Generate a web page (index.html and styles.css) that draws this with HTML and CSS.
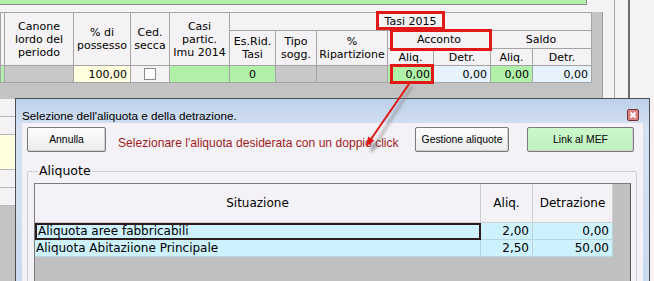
FILE: index.html
```html
<!DOCTYPE html>
<html lang="it">
<head>
    <meta charset="UTF-8">
    <title>Tasi 2015 - Selezione aliquota</title>
    <link rel="stylesheet" href="styles.css">
</head>
<body>
    <div class="screen">
        <div class="left-col">
            <div class="topbar"></div>
            <div class="grid-area">
                <table class="tasi">
                    <colgroup>
                        <col style="width:4px"><col style="width:69px"><col style="width:57px"><col style="width:39px">
                        <col style="width:60px"><col style="width:46px"><col style="width:41px"><col style="width:71px">
                        <col style="width:46px"><col style="width:57px"><col style="width:42px"><col style="width:59px">
                    </colgroup>
                    <tr class="h1">
                        <th rowspan="3"></th>
                        <th rowspan="3">Canone<br>lordo del<br>periodo</th>
                        <th rowspan="3">% di<br>possesso</th>
                        <th rowspan="3">Ced.<br>secca</th>
                        <th rowspan="3">Casi<br>partic.<br>Imu 2014</th>
                        <th colspan="7">Tasi 2015</th>
                    </tr>
                    <tr class="h2">
                        <th rowspan="2">Es.Rid.<br>Tasi</th>
                        <th rowspan="2">Tipo<br>sogg.</th>
                        <th rowspan="2">%<br>Ripartizione</th>
                        <th colspan="2">Acconto</th>
                        <th colspan="2">Saldo</th>
                    </tr>
                    <tr class="h3">
                        <th>Aliq.</th><th>Detr.</th><th>Aliq.</th><th>Detr.</th>
                    </tr>
                    <tr class="data">
                        <td class="green"></td>
                        <td class="gray"></td>
                        <td class="yellow num">100,00</td>
                        <td class="check"><span class="box"></span></td>
                        <td class="green"></td>
                        <td class="green center">0</td>
                        <td class="gray"></td>
                        <td class="gray"></td>
                        <td class="green num">0,00</td>
                        <td class="blue num">0,00</td>
                        <td class="green num">0,00</td>
                        <td class="blue num">0,00</td>
                    </tr>
                </table>
                <!-- righe sotto la finestra -->
                <div class="under">
                    <div class="under-row"></div>
                    <div class="under-row"></div>
                    <div class="under-row yellow-row"></div>
                    <div class="under-row"></div>
                    <div class="under-row"></div>
                </div>
            </div>
        </div>
        <div class="side">
            <div class="rail"></div>
        </div>

        <!-- finestra di selezione -->
        <div class="dialog">
            <div class="titlebar">
                <span class="title">Selezione dell'aliquota e della detrazione.</span>
                <span class="close">
                    <svg width="12" height="12" viewBox="0 0 12 12">
                        <rect x="0.5" y="0.5" width="11" height="11" rx="1.5" fill="#d98585" stroke="#7a3030"/>
                        <path d="M3.5 3.5 L8.5 8.5 M8.5 3.5 L3.5 8.5" stroke="#fff" stroke-width="1.8"/>
                    </svg>
                </span>
            </div>
            <div class="dlg-body">
                <div class="toolbar">
                    <button class="btn annulla">Annulla</button>
                    <span class="msg">Selezionare l'aliquota desiderata con un doppio click</span>
                    <button class="btn gestione">Gestione aliquote</button>
                    <button class="btn mef">Link al MEF</button>
                </div>
                <fieldset class="group">
                    <legend>Aliquote</legend>
                    <div class="grid">
                        <div class="gh">Situazione</div>
                        <div class="gh">Aliq.</div>
                        <div class="gh">Detrazione</div>
                        <div class="gh fill"></div>

                        <div class="gc text focus">Aliquota aree fabbricabili</div>
                        <div class="gc num">2,00</div>
                        <div class="gc num">0,00</div>
                        <div class="gc fill"></div>

                        <div class="gc text">Aliquota Abitaziione Principale</div>
                        <div class="gc num">2,50</div>
                        <div class="gc num">50,00</div>
                        <div class="gc fill"></div>
                    </div>
                </fieldset>
            </div>
        </div>

        <!-- evidenziazioni -->
        <div class="mark mark-tasi"></div>
        <div class="mark mark-acconto"></div>
        <div class="mark mark-cell"></div>
        <svg class="arrow" width="654" height="281" viewBox="0 0 654 281">
            <defs>
                <filter id="blur" x="-20%" y="-20%" width="140%" height="140%">
                    <feGaussianBlur stdDeviation="1.6"/>
                </filter>
            </defs>
            <g filter="url(#blur)" opacity="0.55">
                <line x1="412" y1="86" x2="372" y2="150" stroke="#777" stroke-width="2.5"/>
                <polygon points="370,153 379,146 372,141" fill="#666"/>
            </g>
            <line x1="409" y1="84" x2="369" y2="142" stroke="#e01616" stroke-width="2"/>
            <polygon points="366,147 374.2,140.6 368.2,136.4" fill="#e01616"/>
        </svg>
    </div>
</body>
</html>
```

FILE: styles.css
```css
html, body {
    margin: 0;
    height: 281px;
    overflow: hidden;
}

body {
    background: #f4f2f4;
    font-family: 'DejaVu Sans', Verdana, sans-serif;
    font-size: 11px;
    color: #000;
}

.screen {
    position: relative;
    width: 654px;
    height: 281px;
    overflow: hidden;
    display: flex;
}

.left-col {
    width: 603px;
}

.topbar {
    width: 586px;
    height: 4px;
    background: #b2f0aa;
    border-right: 1px solid #8c8c8c;
    border-bottom: 1px solid #8c8c8c;
    margin-bottom: 7px;
}

.grid-area {
    height: 269px;
    background: #c3c3c3;
    border-right: 1px solid #9c9c9c;
}

/* tabella principale */
.tasi {
    border-collapse: collapse;
    table-layout: fixed;
    width: 591px;
}

.tasi th,
.tasi td {
    border: 1px solid #a4a4a4;
    padding: 0;
    overflow: hidden;
    white-space: nowrap;
}

.tasi th {
    background: #f4f2f4;
    font-weight: normal;
    line-height: 13px;
    text-align: center;
    vertical-align: middle;
}

.tasi .h1 { height: 18px; }
.tasi .h2 { height: 18px; }
.tasi .h3 { height: 17px; }
.tasi .data { height: 17px; }

.tasi td {
    line-height: 15px;
}

.green { background: #b0f0a8; }
.gray { background: #c8c8c8; }
.yellow { background: #ffffe0; }
.blue { background: #e6f3fc; }
.check { background: #f4f2f4; text-align: center; }

.num {
    text-align: right;
    padding-right: 3px !important;
}

.center { text-align: center; }

.box {
    display: inline-block;
    width: 10px;
    height: 10px;
    background: #fff;
    border: 1px solid #8a8a8a;
    vertical-align: middle;
    margin-top: -2px;
}

.under {
    margin-top: 16px;
    width: 15px;
}

.under-row {
    height: 17px;
    background: #f4f2f4;
    border-bottom: 1px solid #b8b8b8;
}

.under .yellow-row {
    height: 34px;
    background: #ffffe0;
}

.side {
    flex: 1;
    padding-left: 11px;
}

.rail {
    width: 13px;
    height: 281px;
    border-left: 1px solid #a8a8a8;
    border-right: 2px solid #6e6e6e;
}

/* finestra */
.dialog {
    position: absolute;
    left: 15px;
    top: 98px;
    width: 621px;
    height: 200px;
    padding: 0 6px;
    border: 1px solid #4a5058;
    background: linear-gradient(#bdd0ea, #d6e2f2 30px, #c9d9ee);
}

.titlebar {
    height: 24px;
    box-sizing: border-box;
    padding-top: 8px;
    display: flex;
    align-items: center;
    justify-content: space-between;
}

.title {
    font-family: 'Liberation Sans', Arial, sans-serif;
    font-size: 11.7px;
}

.close {
    width: 12px;
    height: 12px;
    margin-right: 4px;
}

.close svg {
    display: block;
}

.dlg-body {
    height: 180px;
    background: #f4f2f6;
    padding: 4px 6px 0 5px;
}

.toolbar {
    display: flex;
    align-items: center;
    height: 25px;
    padding-right: 3px;
}

.btn {
    height: 25px;
    box-sizing: border-box;
    margin: 0;
    padding: 0;
    font-family: 'Liberation Sans', Arial, sans-serif;
    font-size: 10.4px;
    color: #000;
    border: 1px solid #7a7a7a;
    border-radius: 2px;
    background: linear-gradient(#fdfdfd, #ececec);
    box-shadow: inset -1px -1px 0 #d0d0d0;
}

.annulla { width: 79px; }
.gestione { width: 94px; }
.mef {
    width: 107px;
    margin-left: 18px;
    background: linear-gradient(#ccf7cc, #bff2bf);
}

.msg {
    flex: 1;
    margin-left: 12px;
    padding-top: 7px;
    font-family: 'Liberation Sans', Arial, sans-serif;
    font-size: 12.1px;
    color: #a01c1c;
}

.group {
    margin: 12px 0 0;
    padding: 5px 5px 0 6px;
    border: 1px solid #cfcfcf;
    border-radius: 2px;
    height: 120px;
}

.group legend {
    font-size: 12.5px;
    line-height: 14px;
    padding: 0 1px;
    margin-left: 4px;
}

.grid {
    display: grid;
    grid-template-columns: 446px 52px 80px 1fr;
    grid-template-rows: 39px 17px 17px;
    width: 597px;
    height: 110px;
    box-sizing: border-box;
    border: 1px solid #7c7c7c;
    border-right-color: #555;
    background: #c0c0c0;
    font-size: 12px;
    align-content: start;
}

.gh {
    background: #f4f2f6;
    border-right: 1px solid #cfcfcf;
    border-bottom: 1px solid #cfcfcf;
    display: flex;
    align-items: center;
    justify-content: center;
}

.gh.fill,
.gc.fill {
    background: #c0c0c0;
    border: none;
}

.gc {
    background: #cdf1fd;
    border-right: 1px solid #b8d4de;
    border-bottom: 1px solid #b8d4de;
    line-height: 16px;
    white-space: nowrap;
    overflow: hidden;
}

.gc.text {
    padding-left: 1px;
}

.gc.num {
    text-align: right;
    padding-right: 3px;
}

.gc.focus {
    border: 2px solid #2e1c1c;
    line-height: 13px;
}

/* evidenziazioni in rosso */
.mark {
    position: absolute;
    border: 3px solid #e21818;
}

.mark-tasi {
    left: 376px;
    top: 11px;
    width: 63px;
    height: 13px;
}

.mark-acconto {
    left: 390px;
    top: 29px;
    width: 96px;
    height: 16px;
}

.mark-cell {
    left: 390px;
    top: 64px;
    width: 38px;
    height: 14px;
}

.arrow {
    position: absolute;
    left: 0;
    top: 0;
    pointer-events: none;
}
```
